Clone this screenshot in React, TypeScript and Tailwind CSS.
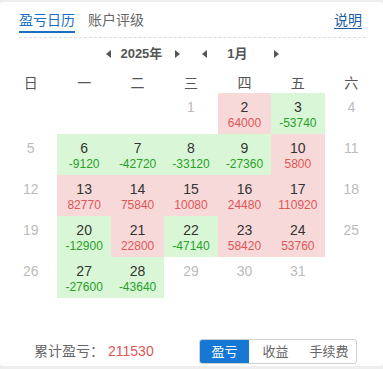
type Cell = { d: number; v?: number } | null;

const rows: Cell[][] = [
  [null, null, null, { d: 1 }, { d: 2, v: 64000 }, { d: 3, v: -53740 }, { d: 4 }],
  [{ d: 5 }, { d: 6, v: -9120 }, { d: 7, v: -42720 }, { d: 8, v: -33120 }, { d: 9, v: -27360 }, { d: 10, v: 5800 }, { d: 11 }],
  [{ d: 12 }, { d: 13, v: 82770 }, { d: 14, v: 75840 }, { d: 15, v: 10080 }, { d: 16, v: 24480 }, { d: 17, v: 110920 }, { d: 18 }],
  [{ d: 19 }, { d: 20, v: -12900 }, { d: 21, v: 22800 }, { d: 22, v: -47140 }, { d: 23, v: 58420 }, { d: 24, v: 53760 }, { d: 25 }],
  [{ d: 26 }, { d: 27, v: -27600 }, { d: 28, v: -43640 }, { d: 29 }, { d: 30 }, { d: 31 }, null],
];

const weekdays = ["日", "一", "二", "三", "四", "五", "六"];

function Tri({ dir }: { dir: "l" | "r" }) {
  return (
    <svg width="5" height="8" viewBox="0 0 5 8" className="fill-[#555]">
      {dir === "l" ? <path d="M5 0 L0 4 L5 8 Z" /> : <path d="M0 0 L5 4 L0 8 Z" />}
    </svg>
  );
}

function DayCell({ c }: { c: Cell }) {
  if (!c) return <div className="h-[41px]" />;
  if (c.v === undefined) {
    return (
      <div className="h-[41px] flex justify-center pt-[5px] text-[14px] leading-[18px] text-[#bbb]">{c.d}</div>
    );
  }
  const up = c.v > 0;
  return (
    <div
      className={
        "h-[41px] flex flex-col items-center pt-[5px] " + (up ? "bg-[#f8d9d9]" : "bg-[#d9f7d6]")
      }
    >
      <span className="text-[14px] leading-[18px] text-[#333]">{c.d}</span>
      <span className={"text-[12px] leading-[15px] " + (up ? "text-[#e05656]" : "text-[#27a027]")}>{c.v}</span>
    </div>
  );
}

export default function App() {
  return (
    <div className="w-[383px] h-[369px] bg-[#eeeeee] pt-[2px] font-['Liberation_Sans','Noto_Sans_CJK_SC',sans-serif]">
      <div className="h-[364px] bg-white rounded-[3px] flex flex-col">
        <div className="mx-[19px] mr-[17px] mt-[8px] flex items-end border-b border-dashed border-[#dcdcdc] pb-[4px]">
          <div className="text-[14px] leading-[20px] text-[#1a6fc2] border-b-2 border-[#1a6fc2] pb-[1px]">盈亏日历</div>
          <div className="ml-[13px] text-[14px] leading-[20px] text-[#666] pb-[3px]">账户评级</div>
          <div className="ml-auto mr-[4px] text-[14px] leading-[20px] text-[#1a5aa0] underline underline-offset-[3px] pb-[3px]">说明</div>
        </div>
        <div className="mt-[7px] flex items-center justify-center text-[13px] leading-[18px] font-bold text-[#555] pl-[2px]">
          <Tri dir="l" />
          <span className="ml-[9px]">2025年</span>
          <span className="ml-[13px]"><Tri dir="r" /></span>
          <span className="ml-[22px]"><Tri dir="l" /></span>
          <span className="ml-[20px]">1月</span>
          <span className="ml-[26px]"><Tri dir="r" /></span>
        </div>
        <div className="mx-[4px] mr-[5px] mt-[10px] grid grid-cols-7">
          {weekdays.map((w) => (
            <div key={w} className="h-[20px] text-center text-[14px] leading-[20px] text-[#555]">{w}</div>
          ))}
        </div>
        <div className="mx-[4px] mr-[5px] grid grid-cols-7">
          {rows.flat().map((c, i) => (
            <DayCell key={i} c={c} />
          ))}
        </div>
        <div className="mt-auto mb-[2px] flex items-center pl-[34px] pr-[26px]">
          <span className="text-[14px] text-[#666]">累计盈亏：</span>
          <span className="ml-[4px] text-[14px] text-[#e05656]">211530</span>
          <div className="ml-auto flex h-[25px] border border-[#d0d0d0] rounded-[3px] overflow-hidden text-[13px]">
            <div className="w-[49px] flex items-center justify-center bg-[#1677d4] text-white">盈亏</div>
            <div className="w-[53px] flex items-center justify-center text-[#666]">收益</div>
            <div className="w-[54px] flex items-center justify-center text-[#666]">手续费</div>
          </div>
        </div>
      </div>
    </div>
  );
}
